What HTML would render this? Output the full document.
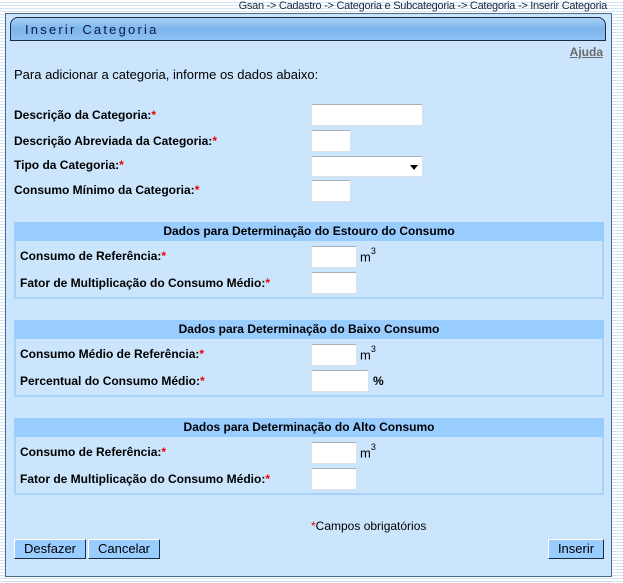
<!DOCTYPE html>
<html><head><meta charset="utf-8"><style>
body{margin:0;width:623px;height:583px;overflow:hidden;position:relative;font-family:"Liberation Sans",Arial,sans-serif;
background:repeating-linear-gradient(to bottom,#fff 0,#fff 2px,#cfe4f7 2px,#cfe4f7 3px);}
.a{position:absolute}
.bc{position:absolute;top:0;right:16px;font-size:11px;letter-spacing:-0.27px;color:#1a2a40;line-height:12px}
.panel{position:absolute;left:5px;top:13px;width:607px;height:564px;background:#cbe5fc;border:1px solid #4a6a8c;box-sizing:border-box}
.title{position:absolute;left:10px;top:17px;width:596px;height:24px;box-sizing:border-box;border:1px solid #1c2c44;border-radius:8px 8px 0 0;
background:linear-gradient(#a9d0f5,#7db5ee 50%,#8ec0f2);font-size:13px;letter-spacing:2.2px;color:#0a1a40;padding-left:14px;line-height:23px}
.lbl{position:absolute;left:14px;font-size:12px;font-weight:bold;color:#000}
.lbl2{left:20px}
.r{color:#e00}
.in{position:absolute;background:#fff;border:1px solid #d9e2ea;border-top-color:#a8b0b8;border-radius:2px;box-sizing:border-box;height:22px}
.sec{position:absolute;left:14px;width:590px;border:2px solid #a9d1f9;box-sizing:border-box}
.sh{position:absolute;left:14px;width:590px;height:19px;background:#99ccff;font-size:12px;font-weight:bold;text-align:center;line-height:19px}
.btn{position:absolute;top:539px;height:20px;background:#99ccff;border:1px solid;border-color:#fff #1c2c44 #1c2c44 #fff;box-sizing:border-box;font-size:13px;text-align:center;line-height:18px}
.m3{position:absolute;left:360px;font-size:13px}
.m3 sup{font-size:9px;position:relative;top:-2px}
</style></head><body>
<div class="bc">Gsan -&gt; Cadastro -&gt; Categoria e Subcategoria -&gt; Categoria -&gt; Inserir Categoria</div>
<div class="panel"></div>
<div class="title">Inserir Categoria</div>
<div class="a" style="right:20px;top:45px;font-size:12px;font-weight:bold;color:#6a6a6a;text-decoration:underline">Ajuda</div>
<div class="a" style="left:14px;top:67px;font-size:13px">Para adicionar a categoria, informe os dados abaixo:</div>

<div class="lbl" style="top:108px">Descrição da Categoria:<span class="r">*</span></div>
<div class="in" style="left:311px;top:104px;width:112px"></div>
<div class="lbl" style="top:134px">Descrição Abreviada da Categoria:<span class="r">*</span></div>
<div class="in" style="left:311px;top:130px;width:40px"></div>
<div class="lbl" style="top:158px">Tipo da Categoria:<span class="r">*</span></div>
<div class="in" style="left:311px;top:156px;width:112px;height:21px"><div class="a" style="right:4px;top:8px;border-left:4px solid transparent;border-right:4px solid transparent;border-top:5px solid #000"></div></div>
<div class="lbl" style="top:183px">Consumo Mínimo da Categoria:<span class="r">*</span></div>
<div class="in" style="left:311px;top:180px;width:40px"></div>

<div class="sec" style="top:222px;height:77px"></div>
<div class="sh" style="top:222px">Dados para Determinação do Estouro do Consumo</div>
<div class="lbl lbl2" style="top:249px">Consumo de Referência:<span class="r">*</span></div>
<div class="in" style="left:311px;top:246px;width:46px"></div>
<div class="m3" style="top:248px">m<sup>3</sup></div>
<div class="lbl lbl2" style="top:276px">Fator de Multiplicação do Consumo Médio:<span class="r">*</span></div>
<div class="in" style="left:311px;top:272px;width:46px"></div>

<div class="sec" style="top:320px;height:77px"></div>
<div class="sh" style="top:320px">Dados para Determinação do Baixo Consumo</div>
<div class="lbl lbl2" style="top:347px">Consumo Médio de Referência:<span class="r">*</span></div>
<div class="in" style="left:311px;top:344px;width:46px"></div>
<div class="m3" style="top:346px">m<sup>3</sup></div>
<div class="lbl lbl2" style="top:374px">Percentual do Consumo Médio:<span class="r">*</span></div>
<div class="in" style="left:311px;top:370px;width:58px"></div>
<div class="a" style="left:373px;top:374px;font-size:12px;font-weight:bold">%</div>

<div class="sec" style="top:418px;height:77px"></div>
<div class="sh" style="top:418px">Dados para Determinação do Alto Consumo</div>
<div class="lbl lbl2" style="top:445px">Consumo de Referência:<span class="r">*</span></div>
<div class="in" style="left:311px;top:442px;width:46px"></div>
<div class="m3" style="top:444px">m<sup>3</sup></div>
<div class="lbl lbl2" style="top:472px">Fator de Multiplicação do Consumo Médio:<span class="r">*</span></div>
<div class="in" style="left:311px;top:468px;width:46px"></div>

<div class="a" style="left:311px;top:519px;font-size:12px"><span class="r">*</span>Campos obrigatórios</div>
<div class="btn" style="left:14px;width:72px">Desfazer</div>
<div class="btn" style="left:88px;width:72px">Cancelar</div>
<div class="btn" style="left:548px;width:56px">Inserir</div>
</body></html>
